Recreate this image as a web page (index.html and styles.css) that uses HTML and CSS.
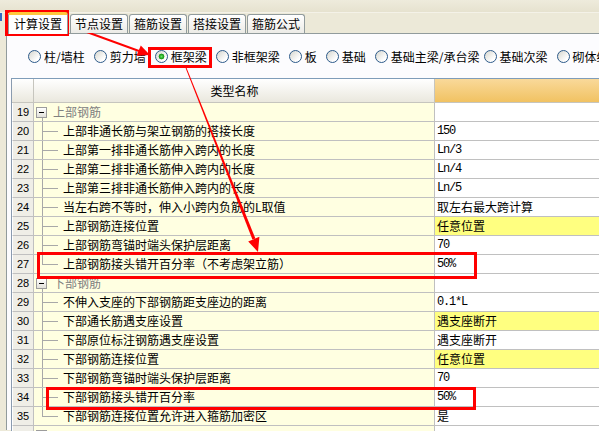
FILE: index.html
```html
<!DOCTYPE html>
<html lang="zh-CN">
<head>
<meta charset="utf-8">
<title>计算设置</title>
<link rel="stylesheet" href="styles.css">
</head>
<body>
<div class="app">
  <div class="edge"></div>
  <div class="topbar"></div>
  <div class="tabs">
    <div class="tab active">计算设置</div>
    <div class="tab">节点设置</div>
    <div class="tab">箍筋设置</div>
    <div class="tab">搭接设置</div>
    <div class="tab">箍筋公式</div>
  </div>
  <div class="panel">
    <div class="radios">
      <label class="radio"><span class="dot"></span>柱/墙柱</label>
      <label class="radio"><span class="dot"></span>剪力墙</label>
      <label class="radio"><span class="dot on"></span>框架梁</label>
      <label class="radio"><span class="dot"></span>非框架梁</label>
      <label class="radio"><span class="dot"></span>板</label>
      <label class="radio"><span class="dot"></span>基础</label>
      <label class="radio radio-tight"><span class="dot"></span>基础主梁/承台梁</label>
      <label class="radio"><span class="dot"></span>基础次梁</label>
      <label class="radio"><span class="dot"></span>砌体结构</label>
    </div>
    <div class="grid">
      <div class="row head"><div class="num"></div><div class="name">类型名称</div><div class="val"></div></div>

      <div class="row"><div class="num">19</div><div class="name group"><span class="box"></span>上部钢筋</div><div class="val"></div></div>
      <div class="row"><div class="num">20</div><div class="name"><span class="branch"></span>上部非通长筋与架立钢筋的搭接长度</div><div class="val mono">150</div></div>
      <div class="row"><div class="num">21</div><div class="name"><span class="branch"></span>上部第一排非通长筋伸入跨内的长度</div><div class="val mono">Ln/3</div></div>
      <div class="row"><div class="num">22</div><div class="name"><span class="branch"></span>上部第二排非通长筋伸入跨内的长度</div><div class="val mono">Ln/4</div></div>
      <div class="row"><div class="num">23</div><div class="name"><span class="branch"></span>上部第三排非通长筋伸入跨内的长度</div><div class="val mono">Ln/5</div></div>
      <div class="row"><div class="num">24</div><div class="name"><span class="branch"></span>当左右跨不等时，伸入小跨内负筋的L取值</div><div class="val">取左右最大跨计算</div></div>
      <div class="row"><div class="num">25</div><div class="name"><span class="branch"></span>上部钢筋连接位置</div><div class="val pick">任意位置</div></div>
      <div class="row"><div class="num">26</div><div class="name"><span class="branch"></span>上部钢筋弯锚时端头保护层距离</div><div class="val mono">70</div></div>
      <div class="row"><div class="num">27</div><div class="name"><span class="branch last"></span>上部钢筋接头错开百分率（不考虑架立筋）</div><div class="val mono">50%</div></div>

      <div class="row"><div class="num">28</div><div class="name group"><span class="box"></span>下部钢筋</div><div class="val"></div></div>
      <div class="row"><div class="num">29</div><div class="name"><span class="branch"></span>不伸入支座的下部钢筋距支座边的距离</div><div class="val mono">0.1*L</div></div>
      <div class="row"><div class="num">30</div><div class="name"><span class="branch"></span>下部通长筋遇支座设置</div><div class="val pick">遇支座断开</div></div>
      <div class="row"><div class="num">31</div><div class="name"><span class="branch"></span>下部原位标注钢筋遇支座设置</div><div class="val">遇支座断开</div></div>
      <div class="row"><div class="num">32</div><div class="name"><span class="branch"></span>下部钢筋连接位置</div><div class="val pick">任意位置</div></div>
      <div class="row"><div class="num">33</div><div class="name"><span class="branch"></span>下部钢筋弯锚时端头保护层距离</div><div class="val mono">70</div></div>
      <div class="row"><div class="num">34</div><div class="name"><span class="branch"></span>下部钢筋接头错开百分率</div><div class="val mono">50%</div></div>
      <div class="row"><div class="num">35</div><div class="name"><span class="branch last"></span>下部钢筋连接位置允许进入箍筋加密区</div><div class="val">是</div></div>
      <div class="row"><div class="num"></div><div class="name group"><span class="box"></span></div><div class="val"></div></div>
    </div>
  </div>

  <div class="mark mark-tab"></div>
  <div class="mark mark-radio"></div>
  <div class="mark mark-row27"></div>
  <div class="mark mark-row34"></div>

  <svg class="arrows" width="599" height="431" viewBox="0 0 599 431">
    <line x1="73" y1="27" x2="139" y2="51" stroke="#FF0000" stroke-width="2"/>
    <polygon points="150,55 136.5,55.8 140.8,45.6" fill="#FF0000"/>
    <polygon points="185.6,68 186.6,68 255.4,238.6 252.4,239.6" fill="#FF0000"/>
    <polygon points="258,252 248.2,241.4 259.4,236.8" fill="#FF0000"/>
  </svg>
</div>
</body>
</html>
```

FILE: styles.css
```css
* { box-sizing: border-box; }
html, body { margin: 0; padding: 0; }
body {
  width: 599px;
  height: 431px;
  overflow: hidden;
  background: #ECE9D8;
  font-family: "Noto Sans CJK SC", "Noto Sans", sans-serif;
  font-size: 12px;
  color: #000;
}
.app {
  position: relative;
  width: 599px;
  height: 431px;
  overflow: hidden;
}
.edge {
  position: absolute;
  left: 0;
  top: 13px;
  width: 2px;
  height: 8px;
  background: #316AC5;
}
.topbar {
  height: 13px;
  background: linear-gradient(#EEEBDC, #E6E2CF);
  border-bottom: 1px solid #F4F2E8;
}
.tabs {
  display: flex;
  align-items: flex-end;
  height: 20px;
  padding-left: 8px;
  position: relative;
  z-index: 1;
}
.tab {
  height: 19px;
  padding: 0 4px;
  margin-left: 1px;
  display: flex;
  align-items: center;
  border: 1px solid #919B9C;
  border-bottom: none;
  border-radius: 3px 3px 0 0;
  background: linear-gradient(#FFFFFF, #ECEBE6);
  white-space: nowrap;
  line-height: 1;
}
.tab.active {
  height: 22px;
  margin-left: 0;
  margin-right: 1px;
  margin-bottom: -1px;
  padding: 0 5px;
  background: #FFFFFF;
  border-top: 3px solid #FFC83C;
  padding-bottom: 2px;
}
.panel {
  margin-left: 6px;
  height: 397px;
  border-top: 1px solid #919B9C;
  border-left: 1px solid #919B9C;
  background: #FCFCFE;
  padding-left: 4px;
}
.radios {
  height: 44px;
  display: flex;
  align-items: center;
  padding-left: 17px;
  padding-top: 1px;
  gap: 9px;
  white-space: nowrap;
}
.radio {
  display: flex;
  align-items: center;
  gap: 3px;
  line-height: 1;
}
.radio-tight { margin-right: -5px; }
.dot {
  width: 13px;
  height: 13px;
  flex: none;
  border-radius: 50%;
  border: 1px solid #2C5A8A;
  background: linear-gradient(135deg, #D6D6CE, #FFFFFF 75%);
}
.dot.on {
  background:
    radial-gradient(circle, #6BE06B 0, #22A722 2px, #1E941E 2.6px, transparent 3.2px),
    linear-gradient(135deg, #D6D6CE, #FFFFFF 75%);
}
.grid {
  border-top: 1px solid #7F9DB9;
  border-left: 1px solid #8A9BAF;
  background: #FFFFE1;
}
.row {
  display: grid;
  grid-template-columns: 22px 401px 200px;
  height: 19px;
}
.row > div {
  border-bottom: 1px solid #C0C0C0;
  border-right: 1px solid #C0C0C0;
  white-space: nowrap;
  overflow: hidden;
}
.num {
  background: #EFEEE7;
  border-left: 1px solid #FFFFFF;
  font-family: "Liberation Sans", Arial, sans-serif;
  font-size: 11px;
  display: flex;
  align-items: center;
  justify-content: center;
  color: #000;
}
.name {
  display: flex;
  align-items: center;
  background: #FFFFE1;
  line-height: 1;
}
.val {
  background: #FFFFFF;
  padding-left: 2px;
  display: flex;
  align-items: center;
  line-height: 1;
}
.val.pick { background: #FFFF80; }
.mono {
  font-family: "Liberation Mono", "Courier New", monospace;
  font-size: 12px;
  letter-spacing: -1.2px;
}
.row.head { height: 24px; }
.row.head > div {
  background: linear-gradient(#FFFFFF, #EAE8DE);
  justify-content: center;
  border-color: #C6C5BE;
}
.row.head .num { border-left: none; }
.row.head .name { padding-left: 1px; }
.row.head .val {
  background: linear-gradient(#F9D99A, #F1C262);
  border-right: none;
}
.branch {
  flex: none;
  align-self: stretch;
  width: 21px;
  margin-left: 8px;
  background:
    linear-gradient(#A8A8A8, #A8A8A8) 0 0 / 1px 100% no-repeat,
    linear-gradient(#A8A8A8, #A8A8A8) 0 9px / 16px 1px no-repeat;
}
.branch.last {
  background:
    linear-gradient(#A8A8A8, #A8A8A8) 0 0 / 1px 10px no-repeat,
    linear-gradient(#A8A8A8, #A8A8A8) 0 9px / 16px 1px no-repeat;
}
.name.group {
  color: #808080;
  background:
    linear-gradient(#A8A8A8, #A8A8A8) 8px 100% / 1px 4px no-repeat,
    #FFFFE1;
}
.box {
  flex: none;
  width: 11px;
  height: 11px;
  margin-left: 2px;
  margin-right: 6px;
  margin-top: 1px;
  border: 1px solid #9C9C9C;
  background:
    linear-gradient(#000000, #000000) center / 5px 1px no-repeat,
    linear-gradient(#FFFFFF, #E2E1DA);
}
.mark {
  position: absolute;
  border: 3px solid #FF0000;
  pointer-events: none;
}
.mark-tab { left: 5px; top: 10px; width: 64px; height: 26px; }
.mark-radio { left: 148px; top: 47px; width: 64px; height: 21px; }
.mark-row27 { left: 37px; top: 252px; width: 440px; height: 27px; }
.mark-row34 { left: 46px; top: 387px; width: 430px; height: 23px; }
.arrows {
  position: absolute;
  left: 0;
  top: 0;
  pointer-events: none;
}
```
